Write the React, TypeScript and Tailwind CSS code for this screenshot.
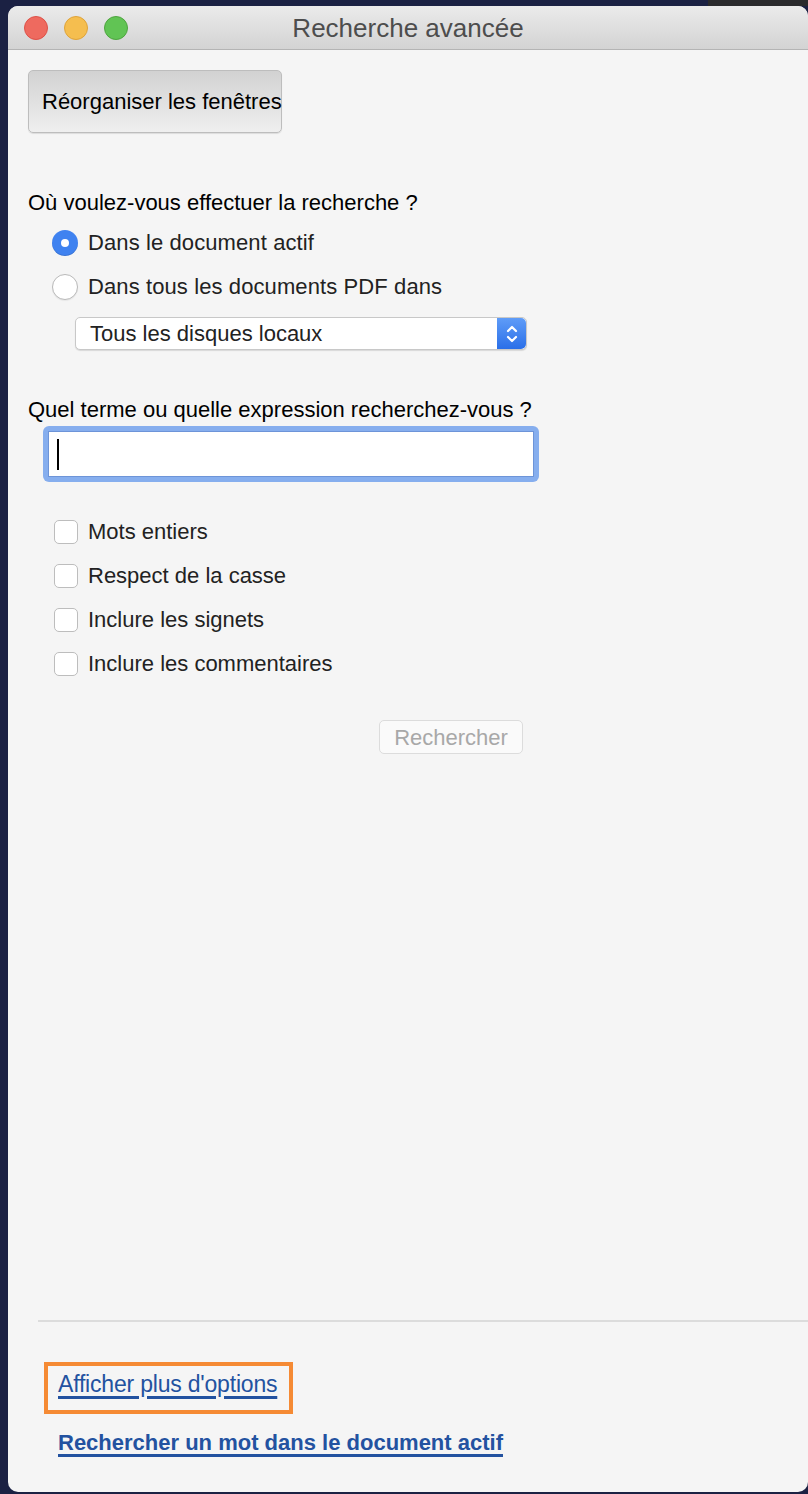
import React from 'react';

const font = { fontFamily: '"Liberation Sans", Arial, sans-serif' };

const Radio = ({ checked, label }: { checked?: boolean; label: string }) => (
  <div className="flex h-[44px] items-center">
    {checked ? (
      <span className="flex h-[26px] w-[26px] items-center justify-center rounded-full bg-[#3f82f0] shadow-[inset_0_-1px_0_rgba(0,0,0,0.12)]">
        <span className="h-[8px] w-[8px] rounded-full bg-white" />
      </span>
    ) : (
      <span className="h-[26px] w-[26px] rounded-full border border-[#b9b9b9] bg-white shadow-[0_1px_1px_rgba(0,0,0,0.06)]" />
    )}
    <span className="ml-[10px] text-[22px] leading-[26px] tracking-[0.1px] text-[#222]">{label}</span>
  </div>
);

const Checkbox = ({ label }: { label: string }) => (
  <div className="flex h-[44px] items-center">
    <span className="h-[24px] w-[24px] rounded-[5px] border border-[#bdbdbd] bg-white" />
    <span className="ml-[10px] text-[22px] leading-[26px] text-[#222]">{label}</span>
  </div>
);

export default function App() {
  return (
    <div className="flex min-h-[1494px] w-[808px] flex-col overflow-hidden bg-[#1b2143]" style={font}>
      {/* desktop strip above the window */}
      <div className="flex h-[6px] justify-end">
        <div className="w-[100px] bg-[#2a2a2c]" />
      </div>

      <div className="ml-[8px] flex h-[1486px] w-[800px] flex-col overflow-hidden rounded-[10px] bg-[#f5f5f5]">
        {/* title bar */}
        <div className="relative flex h-[44px] items-center border-b border-[#b4b4b4] bg-gradient-to-b from-[#ebebeb] to-[#d3d3d3]">
          <div className="flex gap-[16px] pl-[16px]">
            <span className="h-[24px] w-[24px] rounded-full border border-[#dd5148] bg-[#ee6a5f]" />
            <span className="h-[24px] w-[24px] rounded-full border border-[#dea33a] bg-[#f5be4f]" />
            <span className="h-[24px] w-[24px] rounded-full border border-[#4ea43f] bg-[#61c454]" />
          </div>
          <div className="absolute inset-0 flex items-center justify-center pt-[2px] text-[26px] text-[#4d4d4d]">
            Recherche avancée
          </div>
        </div>

        <div className="flex flex-1 flex-col pl-[20px]">
          <button className="mt-[20px] flex h-[63px] w-[254px] items-center whitespace-nowrap rounded-[5px] border border-[#bdbdbd] bg-gradient-to-b from-[#d2d2d2] to-[#efefef] pl-[13px] text-[22px] text-black shadow-[0_1px_1px_rgba(0,0,0,0.1)]">
            Réorganiser les fenêtres
          </button>

          <div className="mt-[57px] text-[22px] leading-[26px] text-black">
            Où voulez-vous effectuer la recherche ?
          </div>

          <div className="ml-[24px] mt-[5px] flex flex-col">
            <Radio checked label="Dans le document actif" />
            <Radio label="Dans tous les documents PDF dans" />
          </div>

          <div className="ml-[47px] mt-[8px] flex h-[33px] w-[452px] items-stretch rounded-[5px] border border-[#c8c8c8] bg-white shadow-[0_1px_1px_rgba(0,0,0,0.12)]">
            <span className="flex flex-1 items-center pl-[14px] text-[22px] text-[#222]">Tous les disques locaux</span>
            <span className="flex w-[29px] items-center justify-center rounded-r-[5px] bg-gradient-to-b from-[#5f9cf8] to-[#2a6fe8]">
              <svg width="14" height="22" viewBox="0 0 14 22" fill="none" stroke="white" strokeWidth="2.2" strokeLinecap="round" strokeLinejoin="round">
                <path d="M3 8 L7 4 L11 8" />
                <path d="M3 14 L7 18 L11 14" />
              </svg>
            </span>
          </div>

          <div className="mt-[47px] text-[22px] leading-[26px] text-black">
            Quel terme ou quelle expression recherchez-vous ?
          </div>

          <div className="ml-[15px] mt-[3px] h-[56px] w-[496px] rounded-[6px] bg-[#86aeee] p-[5px]">
            <div className="flex h-full w-full items-center border border-[#6d94d8] bg-white pl-[8px]">
              <span className="h-[31px] w-[2px] bg-black" />
            </div>
          </div>

          <div className="ml-[26px] mt-[28px] flex flex-col">
            <Checkbox label="Mots entiers" />
            <Checkbox label="Respect de la casse" />
            <Checkbox label="Inclure les signets" />
            <Checkbox label="Inclure les commentaires" />
          </div>

          <button className="ml-[351px] mt-[34px] flex h-[34px] w-[144px] items-center justify-center rounded-[5px] border border-[#dcdcdc] bg-[#fafafa] text-[22px] text-[#a8a8a8]">
            Rechercher
          </button>

          <div className="flex-1" />

          <div className="ml-[10px] h-[2px] bg-[#dcdcdc]" />

          <div className="ml-[16px] mt-[40px] flex h-[52px] w-[249px] items-center border-[4px] border-[#f58a34] pb-[8px] pl-[10px]">
            <a className="text-[23px] leading-[28px] tracking-[-0.2px] text-[#2352a0] underline decoration-[3px] underline-offset-[4px]">
              Afficher plus d'options
            </a>
          </div>

          <a className="ml-[30px] mt-[15px] w-fit text-[22px] font-bold leading-[28px] text-[#2352a0] underline decoration-[3px] underline-offset-[4px]">
            Rechercher un mot dans le document actif
          </a>

          <div className="h-[35px]" />
        </div>
      </div>
    </div>
  );
}
